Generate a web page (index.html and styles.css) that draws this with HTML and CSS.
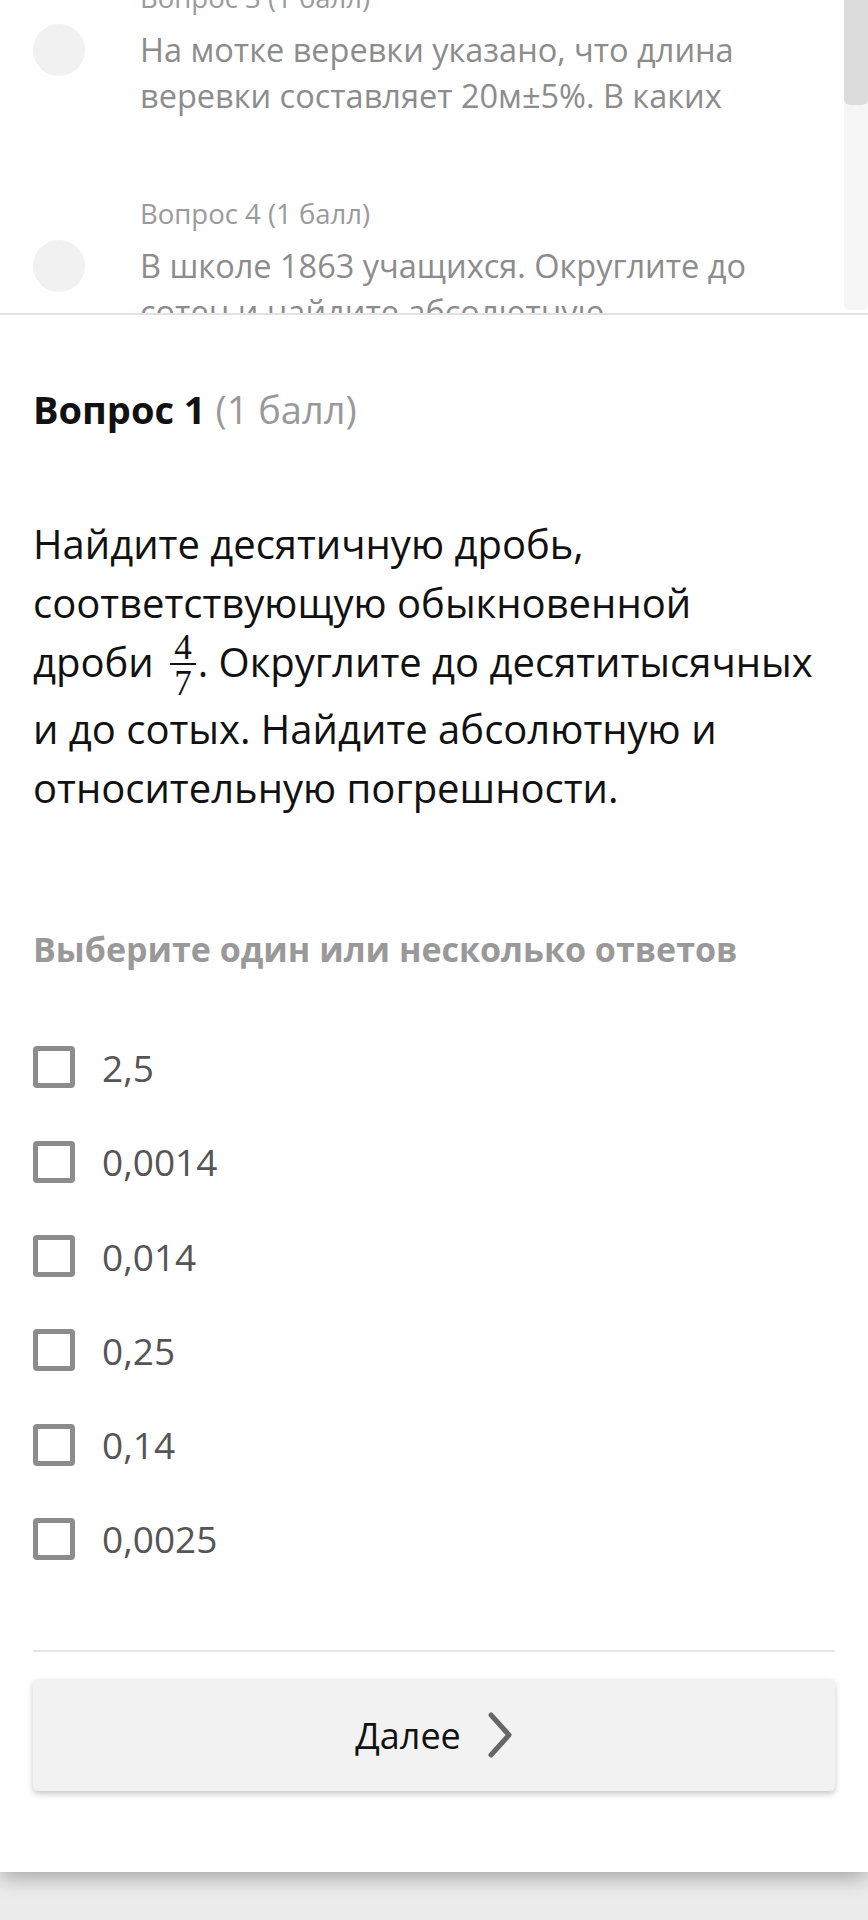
FILE: index.html
```html
<!DOCTYPE html>
<html lang="ru">
<head>
	<meta charset="UTF-8">
	<meta name="viewport" content="width=device-width, initial-scale=1.0">
	<title>Вопрос 1</title>
	<link rel="stylesheet" href="styles.css">
</head>
<body>
	<div class="card">
		<!-- список вопросов, прокручен вниз -->
		<div class="list">
			<div class="list-inner">
				<div class="item">
					<div class="item-label">Вопрос 3 (1 балл)</div>
					<span class="dot"></span>
					<div class="item-text">На мотке веревки указано, что длина веревки составляет 20м±5%. В каких пределах находится длина веревки?</div>
				</div>
				<div class="item">
					<div class="item-label">Вопрос 4 (1 балл)</div>
					<span class="dot"></span>
					<div class="item-text">В школе 1863 учащихся. Округлите до сотен и найдите абсолютную погрешность.</div>
				</div>
			</div>
			<div class="scroll"><div class="thumb"></div></div>
		</div>

		<div class="main">
			<h2 class="title">Вопрос 1 <span>(1 балл)</span></h2>
			<p class="question">Найдите десятичную дробь, соответствующую обыкновенной дроби <span class="nobr"><span class="frac"><span>4</span><span class="den">7</span></span>.</span> Округлите до десятитысячных и до сотых. Найдите абсолютную и относительную погрешности.</p>
			<div class="hint">Выберите один или несколько ответов</div>

			<div class="options">
				<label class="option"><span class="box"></span>2,5</label>
				<label class="option"><span class="box"></span>0,0014</label>
				<label class="option"><span class="box"></span>0,014</label>
				<label class="option"><span class="box"></span>0,25</label>
				<label class="option"><span class="box"></span>0,14</label>
				<label class="option"><span class="box"></span>0,0025</label>
			</div>

			<div class="line"></div>
			<button class="next">Далее
				<svg width="26" height="46" viewBox="0 0 26 46"><path d="M4 3 L22 23 L4 43" fill="none" stroke="#666" stroke-width="5" stroke-linecap="round" stroke-linejoin="round"/></svg>
			</button>
		</div>
	</div>
</body>
</html>
```

FILE: styles.css
```css
*{
	margin: 0;
	padding: 0;
	box-sizing: border-box;
}
body{
	background: #ececec;
	font-family: "Open Sans", "Noto Sans", sans-serif;
	height: 1920px;
	overflow: hidden;
}
.card{
	background: #fff;
	box-shadow: 0 4px 22px rgba(0,0,0,.35);
	padding-bottom: 81px;
}

/* верхний список */
.list{
	height: 315px;
	overflow: hidden;
	border-bottom: 2px solid #e2e2e2;
	position: relative;
}
.list-inner{
	margin-top: -19px;	/* прокрутка */
	padding-right: 72px;
}
.item{
	display: grid;
	grid-template-columns: 52px 1fr;
	column-gap: 55px;
	padding-left: 33px;
	margin-bottom: 78px;
}
.item-label{
	grid-column: 2;
	font-size: 27.5px;
	line-height: 34px;
	color: #9a9a9a;
	margin-bottom: 12px;
}
.dot{
	grid-column: 1;
	width: 52px;
	height: 52px;
	margin-top: -3px;
	border-radius: 50%;
	background: #f1f1f1;
}
.item-text{
	grid-column: 2;
	font-size: 32.5px;
	line-height: 46px;
	color: #8c8c8c;
	max-height: 92px;
	overflow: hidden;
}
.scroll{
	position: absolute;
	top: 0;
	right: 0;
	width: 24px;
	height: 310px;
	background: #f6f6f6;
	border-radius: 0 0 6px 6px;
}
.thumb{
	height: 105px;
	background: #dcdcdc;
	border-radius: 0 0 6px 6px;
}

/* основной вопрос */
.main{
	padding: 0 38px 0 33px;
}
.title{
	margin-top: 70px;
	font-size: 38px;
	line-height: 48px;
	font-weight: 700;
	color: #111;
}
.title span{
	font-weight: 400;
	color: #999;
}
.question{
	margin-top: 81px;
	margin-right: 8px;
	font-size: 40px;
	line-height: 59px;
	color: #111;
}
.nobr{
	white-space: nowrap;
}
.frac{
	display: inline-flex;
	flex-direction: column;
	align-items: center;
	vertical-align: middle;
	font-family: "Liberation Serif", "DejaVu Serif", serif;
	font-size: 35px;
	line-height: 30px;
	margin: 0 2px 0 6px;
}
.frac .den{
	border-top: 2px solid #111;
	padding: 4px 4px 0;
}
.hint{
	margin-top: 109px;
	font-size: 34px;
	line-height: 46px;
	font-weight: 700;
	color: #999;
}
.options{
	margin-top: 48px;
}
.option{
	display: flex;
	align-items: center;
	height: 94.3px;
	font-size: 37px;
	color: #555;
}
.box{
	width: 42px;
	height: 42px;
	border: 5px solid #8c8c8c;
	border-radius: 4px;
	margin-right: 27px;
}
.line{
	margin-top: 64px;
	height: 2px;
	background: #e6e6e6;
	margin-right: -5px;
}
.next{
	margin-top: 27px;
	width: calc(100% + 5px);
	height: 112px;
	border: none;
	border-radius: 5px;
	background: #f2f2f2;
	box-shadow: 0 3px 6px rgba(0,0,0,.22);
	display: flex;
	align-items: center;
	justify-content: center;
	gap: 26px;
	font-family: "Open Sans", "Noto Sans", sans-serif;
	font-size: 36px;
	color: #111;
}
```
